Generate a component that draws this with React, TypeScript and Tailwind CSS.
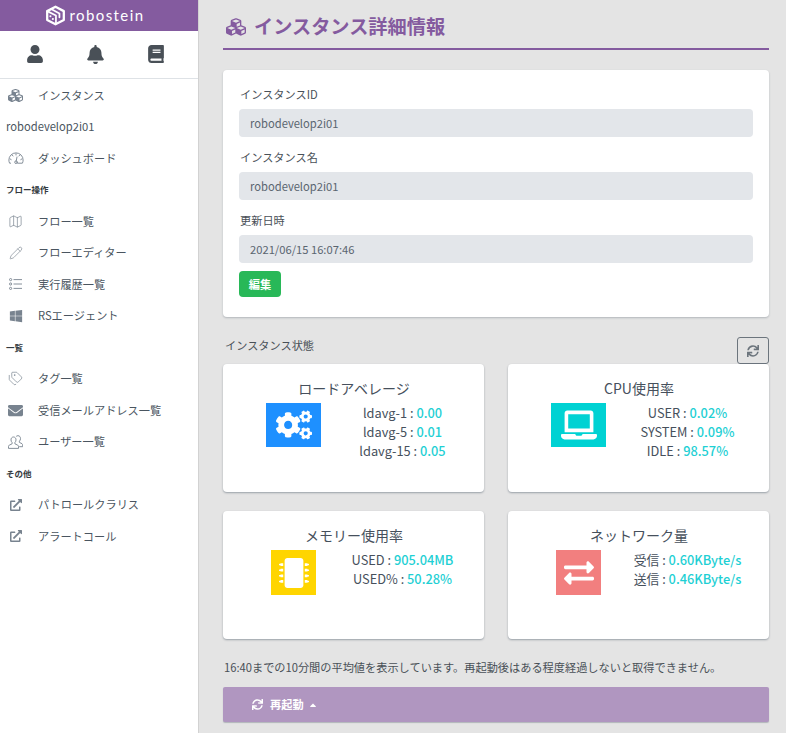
import type { ReactNode } from 'react';
import { FaBell, FaBook, FaCaretUp, FaCogs, FaCubes, FaEnvelope, FaExchangeAlt, FaExternalLinkAlt, FaLaptop, FaMicrochip, FaSync, FaUser, FaWindows } from 'react-icons/fa';
import { Map as MapIcon, Pencil, Tags } from 'lucide-react';

const font = { fontFamily: '"Noto Sans CJK JP", "Noto Sans", sans-serif' };

function Logo() {
    return (
        <svg viewBox="0 0 24 24" className="h-[21px] w-[21px]" fill="none" stroke="white" strokeWidth="2.6" strokeLinejoin="round" strokeLinecap="round">
            <path d="M12 2 21.5 7V17.2L12 22 2.5 17.2V7Z" />
            <path d="M7 4.6 16.5 9.6V14M12.5 12V21M2.5 7 12.5 12" strokeWidth="2" />
            <circle cx="6.2" cy="12.8" r="1.2" fill="white" stroke="none" />
            <circle cx="9" cy="16" r="1.2" fill="white" stroke="none" />
        </svg>
    );
}

function GaugeIcon() {
    return (
        <svg viewBox="0 0 16 12" className="h-[12px] w-[16px]" fill="none" stroke="currentColor" strokeWidth="0.9" strokeLinecap="round">
            <path d="M2.6 11.2H1.6A7 7 0 0 1 .9 8 7.1 7.1 0 0 1 15.1 8a7 7 0 0 1-.7 3.2H9.6" />
            <path d="M3.2 7.6 2.2 7M5 4 4.2 3M8 3V1.8M11 4 11.8 3M12.8 7.6 13.8 7" />
            <circle cx="8" cy="10.2" r="1.3" />
            <path d="M8.2 9 9 5" />
        </svg>
    );
}

function ListIcon() {
    return (
        <svg viewBox="0 0 13 12" className="h-[12px] w-[13px]" fill="none" stroke="currentColor" strokeWidth="0.9">
            <circle cx="1.6" cy="1.6" r="1.1" />
            <circle cx="1.6" cy="6" r="1.1" />
            <circle cx="1.6" cy="10.4" r="1.1" />
            <path d="M4.5 1.6H13M4.5 6H13M4.5 10.4H13" />
        </svg>
    );
}

function UsersIcon() {
    return (
        <svg viewBox="0 0 15 14" className="h-[14px] w-[15px]" fill="none" stroke="currentColor" strokeWidth="0.9" strokeLinejoin="round">
            <path d="M8.2 1.4C8.6 1 9.3.7 10 .7c1.6 0 2.5 1.3 2.5 2.9 0 1-.4 2-1.1 2.6v1.2l2.6 1.3c.5.3.7.7.7 1.2v1.8h-3.5" />
            <path d="M5.5 2C3.900 2 3 3.300 3 4.900c0 1 .4 2 1.100 2.600v1.300L1.200 10.200c-.5.300-.7.700-.7 1.200v2h10v-2c0-.5-.2-.9-.7-1.200L6.900 8.800V7.500C7.600 6.900 8 5.900 8 4.900 8 3.300 7.100 2 5.500 2Z" />
        </svg>
    );
}

function NavItem({ icon, label }: { icon: ReactNode; label: string }) {
    return (
        <div className="flex h-[31.5px] items-center text-[11.2px] text-[#4a5560]">
            <span className="flex w-[38px] shrink-0 justify-center pr-[7px] text-[#78838f]">{icon}</span>
            <span>{label}</span>
        </div>
    );
}

function NavHeading({ label }: { label: string }) {
    return <div className="flex h-[31.5px] items-center pl-[6px] text-[8.5px] font-bold text-[#343a40]">{label}</div>;
}

function Field({ label, value }: { label: string; value: string }) {
    return (
        <div className="mb-[5.2px]">
            <div className="flex h-[30px] items-center pl-[1px] text-[11.2px] text-[#495057]">{label}</div>
            <div className="flex h-[28px] items-center rounded-[4px] bg-[#e3e6ea] px-[11px] text-[11.2px] text-[#5a6570]">{value}</div>
        </div>
    );
}

function Stat({ title, icon, rows }: { title: string; icon: ReactNode; rows: [string, string][] }) {
    return (
        <div className="h-[128px] rounded-[4px] bg-white shadow-[0_1px_2px_rgba(60,75,90,0.45)]">
            <div className="flex h-[39px] items-end justify-center pb-[4px] pl-[1px] text-[14px] text-[#46505c]">{title}</div>
            <div className="flex pl-5">
                <div className="flex w-[101px] justify-center">{icon}</div>
                <div className="flex w-[117px] flex-col items-center whitespace-nowrap text-[12.8px] leading-[19px] text-[#46505c]">
                    {rows.map(([k, v]) => (
                        <div key={k}>
                            {k} : <span className="font-medium text-[#1fd0d4]">{v}</span>
                        </div>
                    ))}
                </div>
            </div>
        </div>
    );
}

export default function App() {
    return (
        <div style={font} className="flex h-[733px] w-[786px] overflow-hidden bg-[#e4e4e4]">
            <aside className="h-full w-[199px] shrink-0 border-r border-[#d2d2d2] bg-white">
                <div className="flex h-[31px] items-center justify-center gap-[4px] bg-[#845b9f] pr-[9px]">
                    <Logo />
                    <span className="pb-[1px] text-[15px] tracking-[1.4px] text-white" style={{ fontFamily: 'Lato, sans-serif' }}>
                        robostein
                    </span>
                </div>
                <div className="grid h-[48px] grid-cols-3 items-center justify-items-center border-b border-[#dee2e6] pb-[1px] pl-[5px] pr-[12px] text-[#495057]">
                    <FaUser className="text-[18px]" />
                    <FaBell className="text-[19px]" />
                    <FaBook className="text-[18px]" />
                </div>
                <div className="pt-[0.25px]">
                    <NavItem icon={<FaCubes className="text-[15px]" />} label="インスタンス" />
                    <div className="flex h-[31.5px] items-center pl-[6px] text-[11.2px] text-[#4a5560]">robodevelop2i01</div>
                    <NavItem icon={<GaugeIcon />} label="ダッシュボード" />
                    <NavHeading label="フロー操作" />
                    <NavItem icon={<MapIcon size={15} strokeWidth={1.1} />} label="フロー一覧" />
                    <NavItem icon={<Pencil size={14} strokeWidth={1.1} />} label="フローエディター" />
                    <NavItem icon={<ListIcon />} label="実行履歴一覧" />
                    <NavItem icon={<FaWindows className="text-[14px]" />} label="RSエージェント" />
                    <NavHeading label="一覧" />
                    <NavItem icon={<Tags size={15} strokeWidth={1.1} />} label="タグ一覧" />
                    <NavItem icon={<FaEnvelope className="text-[15px]" />} label="受信メールアドレス一覧" />
                    <NavItem icon={<UsersIcon />} label="ユーザー一覧" />
                    <NavHeading label="その他" />
                    <NavItem icon={<FaExternalLinkAlt className="text-[12px]" />} label="パトロールクラリス" />
                    <NavItem icon={<FaExternalLinkAlt className="text-[12px]" />} label="アラートコール" />
                </div>
            </aside>
            <main className="w-[587px] pl-[24px] pr-[17px]">
                <h1 className="flex h-[50px] items-center gap-[8px] border-b-2 border-[#845b9f] pl-[3px] pt-[5px] text-[19.2px] font-bold text-[#845b9f]">
                    <FaCubes className="text-[20px]" />
                    <span>インスタンス詳細情報</span>
                </h1>
                <section className="mt-[20px] h-[247px] rounded-[4px] bg-white px-[16px] pt-[9px] shadow-[0_1px_2px_rgba(60,75,90,0.3)]">
                    <Field label="インスタンスID" value="robodevelop2i01" />
                    <Field label="インスタンス名" value="robodevelop2i01" />
                    <Field label="更新日時" value="2021/06/15 16:07:46" />
                    <div className="mt-[8px] flex h-[26px] w-[42px] items-center justify-center rounded-[4px] bg-[#28b858] text-[11.2px] font-bold text-white">編集</div>
                </section>
                <div className="mt-[20px] flex h-[27px] items-center justify-between">
                    <span className="pb-[11px] pl-[2px] text-[11.2px] text-[#495057]">インスタンス状態</span>
                    <span className="flex h-[27px] w-[32px] items-center justify-center rounded-[3px] border border-[#6c757d] text-[#6c757d]">
                        <FaSync className="text-[12px]" />
                    </span>
                </div>
                <div className="grid grid-cols-[261px_261px] gap-x-[24px] gap-y-[19px]">
                    <Stat
                        title="ロードアベレージ"
                        icon={
                            <div className="flex h-[44px] w-[55px] items-center justify-center bg-[#1e90ff] text-white">
                                <FaCogs className="text-[36px]" />
                            </div>
                        }
                        rows={[
                            ['ldavg-1', '0.00'],
                            ['ldavg-5', '0.01'],
                            ['ldavg-15', '0.05'],
                        ]}
                    />
                    <Stat
                        title="CPU使用率"
                        icon={
                            <div className="flex h-[44px] w-[55px] items-center justify-center bg-[#00d2d3] text-white">
                                <FaLaptop className="text-[36px]" />
                            </div>
                        }
                        rows={[
                            ['USER', '0.02%'],
                            ['SYSTEM', '0.09%'],
                            ['IDLE', '98.57%'],
                        ]}
                    />
                    <Stat
                        title="メモリー使用率"
                        icon={
                            <div className="flex h-[45px] w-[45px] items-center justify-center bg-[#ffd500] text-white">
                                <FaMicrochip className="text-[30px]" />
                            </div>
                        }
                        rows={[
                            ['USED', '905.04MB'],
                            ['USED%', '50.28%'],
                        ]}
                    />
                    <Stat
                        title="ネットワーク量"
                        icon={
                            <div className="flex h-[45px] w-[45px] items-center justify-center bg-[#f27f7f] text-white">
                                <FaExchangeAlt className="text-[30px]" />
                            </div>
                        }
                        rows={[
                            ['受信', '0.60KByte/s'],
                            ['送信', '0.46KByte/s'],
                        ]}
                    />
                </div>
                <p className="mt-[19px] h-[18px] pl-[1px] text-[11.2px] leading-[18px] text-[#495057]">16:40までの10分間の平均値を表示しています。再起動後はある程度経過しないと取得できません。</p>
                <div className="mt-[11px] flex h-[35px] items-center gap-[7px] rounded-[2px] bg-[#b096c0] pl-[29px] text-[11.2px] font-bold text-white shadow-[0_1px_1px_rgba(60,75,90,0.3)]">
                    <FaSync className="text-[11px]" />
                    <span>再起動</span>
                    <FaCaretUp className="-ml-[3px] text-[10px]" />
                </div>
            </main>
        </div>
    );
}
